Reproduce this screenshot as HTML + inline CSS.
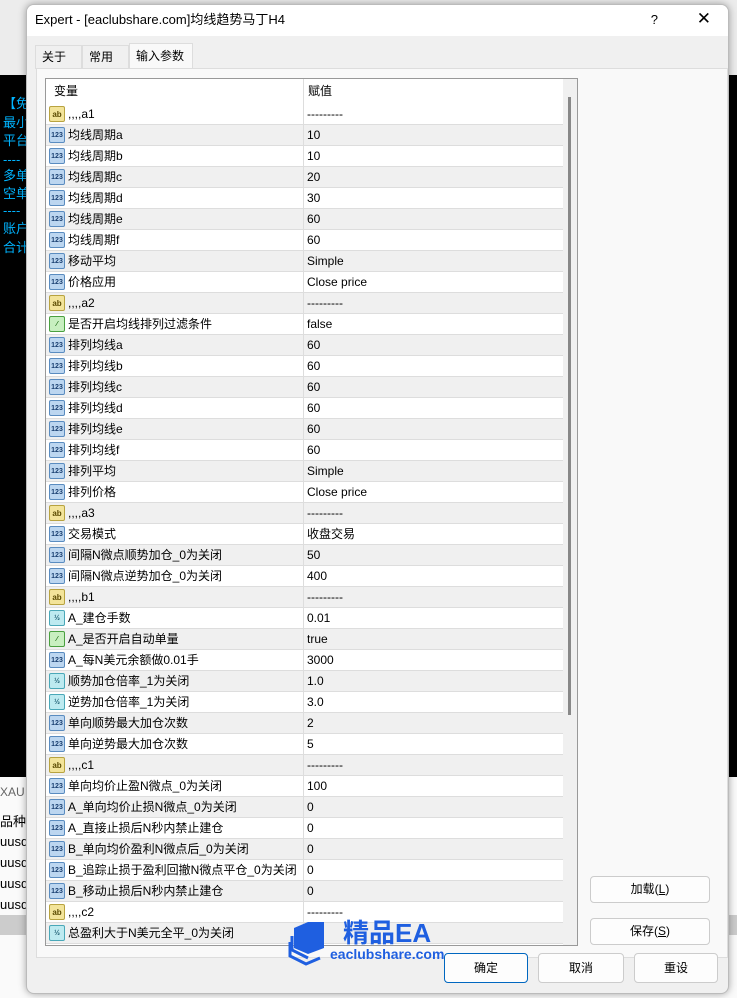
<!DOCTYPE html>
<html><head><meta charset="utf-8"><style>
*{box-sizing:border-box;margin:0;padding:0}
body{width:737px;height:998px;position:relative;overflow:hidden;background:#f0f0f0;font-family:"Liberation Sans","Noto Sans CJK SC",sans-serif;font-size:12px;color:#000}
.abs{position:absolute}
.chart{left:0;top:75px;width:737px;height:702px;background:#000}
.ct{position:absolute;left:3px;color:#00b4ff;font-size:13px;line-height:16px}
.dlg{left:26px;top:4px;width:703px;height:990px;background:#f0f0f0;border:1px solid #bbb;border-radius:8px;box-shadow:0 0 8px rgba(0,0,0,.35);overflow:hidden}
.title{left:0;top:0;width:703px;height:31px;background:#fff;font-size:13px;line-height:30px;padding-left:8px}
.tab{top:40px;height:24px;font-size:12px;line-height:22px;padding:0 6px;border:1px solid #ddd;border-bottom:none;background:#f0f0f0;white-space:nowrap}
.panel{left:9px;top:63px;width:692px;height:890px;background:#f9f9f9;border:1px solid #ddd}
.tbl{left:45px;top:78px;width:533px;height:868px;border:1px solid #999;background:#fff;overflow:hidden}
.hdr{position:absolute;left:0;top:0;width:517px;height:25px;background:#fff;font-size:12px;line-height:25px}
.row{position:absolute;left:0;width:517px;height:21px;border-bottom:1px solid #ddd;font-size:12px;line-height:20px}
.row.g{background:#f0f0f0}
.row .n{position:absolute;left:22px;top:0;white-space:nowrap}
.row .v{position:absolute;left:261px;top:0;width:256px;height:20px;}
.sep{position:absolute;left:257px;top:0;width:1px;height:100%;background:#ddd}
.ic{position:absolute;left:3px;top:2px;width:16px;height:16px;border-radius:2px;font-size:7px;font-weight:bold;text-align:center;line-height:15px}
.ab{background:#f3e49a;border:1px solid #b8a340;color:#5a4a00;font-size:8px}
.nm{background:#bcd6f0;border:1px solid #5a8cc0;color:#1a3f70}
.fl{background:#bdeaf0;border:1px solid #4aa8b8;color:#1a5a70}
.bo{background:#c8efc0;border:1px solid #4aa040;color:#1a6a10}
.btn{position:absolute;background:#fdfdfd;border:1px solid #ccc;border-radius:4px;font-size:12px;text-align:center}
</style></head><body>
<div class="abs" style="left:0;top:0;width:737px;height:75px;background:#ececec"></div>
<div class="abs chart"></div>
<div class="ct" style="top:96px">【免</div>
<div class="ct" style="top:115px">最小</div>
<div class="ct" style="top:133px">平台</div>
<div class="ct" style="top:152px">----</div>
<div class="ct" style="top:168px">多单</div>
<div class="ct" style="top:186px">空单</div>
<div class="ct" style="top:203px">----</div>
<div class="ct" style="top:221px">账户</div>
<div class="ct" style="top:240px">合计</div>
<div class="abs" style="left:0;top:777px;width:737px;height:221px;background:#fafafa"></div>
<div class="abs" style="left:0;top:785px;font-size:12px;color:#666">XAU</div>
<div class="abs" style="left:0;top:811px;font-size:13px">品种</div>
<div class="abs" style="left:0;top:834px;font-size:13px">uusd</div>
<div class="abs" style="left:0;top:855px;font-size:13px">uusd</div>
<div class="abs" style="left:0;top:876px;font-size:13px">uusd</div>
<div class="abs" style="left:0;top:897px;font-size:13px">uusd</div>
<div class="abs" style="left:0;top:915px;width:737px;height:20px;background:#ccc"></div>

<div class="abs dlg">
 <div class="abs title">Expert - [eaclubshare.com]均线趋势马丁H4</div>
 <div class="abs" style="right:70px;top:7px;font-size:13px">?</div>
 <div class="abs" style="right:17px;top:4px;font-size:17px">✕</div>
 <div class="abs tab" style="left:8px;width:47px">关于</div>
 <div class="abs tab" style="left:55px;width:47px">常用</div>
 <div class="abs tab" style="left:102px;top:38px;height:26px;line-height:24px;width:64px;background:#f9f9f9">输入参数</div>
 <div class="abs panel"></div>
</div>

<div class="abs tbl">
 <div class="hdr"><span style="position:absolute;left:8px;top:0">变量</span><span style="position:absolute;left:262px;top:0">赋值</span><div class="sep"></div></div>
 <div id="rows"></div>
 <div class="abs" style="left:517px;top:0;width:15px;height:866px;background:#f0f0f0"></div>
 <div class="abs" style="left:522px;top:18px;width:3px;height:618px;background:#888"></div>
</div>

<div class="btn" style="left:590px;top:876px;width:120px;height:27px;line-height:25px">加载(<u>L</u>)</div>
<div class="btn" style="left:590px;top:918px;width:120px;height:27px;line-height:25px">保存(<u>S</u>)</div>
<div class="btn" style="left:444px;top:953px;width:84px;height:30px;line-height:28px;border:1px solid #0067c0">确定</div>
<div class="btn" style="left:538px;top:953px;width:86px;height:30px;line-height:28px">取消</div>
<div class="btn" style="left:634px;top:953px;width:84px;height:30px;line-height:28px">重设</div>

<svg class="abs" style="left:288px;top:920px" width="48" height="46" viewBox="0 0 48 46">
<path d="M6 8 L20 2 L36 2 L36 28 L20 34 L6 28Z" fill="#1f5fe0"/>
<path d="M2 22 L2 36 L18 44 L32 38" stroke="#1f5fe0" stroke-width="3" fill="none"/>
<path d="M4 16 L4 30 L20 38" stroke="#1f5fe0" stroke-width="3" fill="none"/>
</svg>
<div class="abs" style="left:343px;top:918px;font-size:26px;line-height:30px;font-weight:bold;color:#1f5fe0">精品EA</div>
<div class="abs" style="left:330px;top:946px;font-size:14px;line-height:17px;font-weight:bold;color:#1f5fe0">eaclubshare.com</div>

<script>
var R=[["ab",",,,,a1","---------"],["nm","均线周期a","10"],["nm","均线周期b","10"],["nm","均线周期c","20"],["nm","均线周期d","30"],["nm","均线周期e","60"],["nm","均线周期f","60"],["nm","移动平均","Simple"],["nm","价格应用","Close price"],["ab",",,,,a2","---------"],["bo","是否开启均线排列过滤条件","false"],["nm","排列均线a","60"],["nm","排列均线b","60"],["nm","排列均线c","60"],["nm","排列均线d","60"],["nm","排列均线e","60"],["nm","排列均线f","60"],["nm","排列平均","Simple"],["nm","排列价格","Close price"],["ab",",,,,a3","---------"],["nm","交易模式","收盘交易"],["nm","间隔N微点顺势加仓_0为关闭","50"],["nm","间隔N微点逆势加仓_0为关闭","400"],["ab",",,,,b1","---------"],["fl","A_建仓手数","0.01"],["bo","A_是否开启自动单量","true"],["nm","A_每N美元余额做0.01手","3000"],["fl","顺势加仓倍率_1为关闭","1.0"],["fl","逆势加仓倍率_1为关闭","3.0"],["nm","单向顺势最大加仓次数","2"],["nm","单向逆势最大加仓次数","5"],["ab",",,,,c1","---------"],["nm","单向均价止盈N微点_0为关闭","100"],["nm","A_单向均价止损N微点_0为关闭","0"],["nm","A_直接止损后N秒内禁止建仓","0"],["nm","B_单向均价盈利N微点后_0为关闭","0"],["nm","B_追踪止损于盈利回撤N微点平仓_0为关闭","0"],["nm","B_移动止损后N秒内禁止建仓","0"],["ab",",,,,c2","---------"],["fl","总盈利大于N美元全平_0为关闭","0"]];
var L={ab:"ab",nm:"123",fl:"½",bo:"⁄"};var h="";
R.forEach(function(r,i){h+='<div class="row'+(i%2?' g':'')+'" style="top:'+(25+i*21)+'px"><div class="ic '+r[0]+'">'+L[r[0]]+'</div><span class="n">'+r[1]+'</span><div class="sep"></div><span class="v">'+r[2]+'</span></div>';});
document.getElementById("rows").innerHTML=h;
</script>
</body></html>
